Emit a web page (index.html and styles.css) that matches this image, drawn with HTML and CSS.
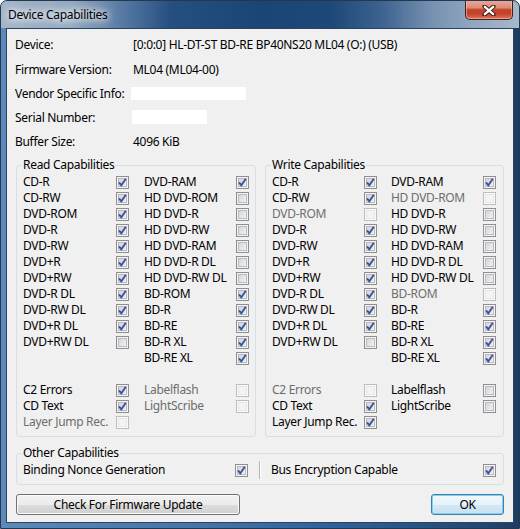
FILE: index.html
```html
<!DOCTYPE html>
<html>
<head>
<meta charset="utf-8">
<title>Device Capabilities</title>
<link rel="stylesheet" href="styles.css">
</head>
<body>
<svg class="defs" width="0" height="0" aria-hidden="true">
  <symbol id="chk" viewBox="0 0 11 11">
    <polyline points="2,5.4 4.3,8.4 8.8,1.8" fill="none" stroke="#3f549b" stroke-width="1.9"/>
  </symbol>
</svg>
<div class="window">
  <div class="titlebar">
    <span class="title">Device Capabilities</span>
    <span class="close"><svg width="14" height="11" viewBox="0 0 14 11"><path d="M2.5 1.5 L11.5 9.5 M11.5 1.5 L2.5 9.5" stroke="#3b1710" stroke-width="4.2" stroke-linecap="round"/><path d="M2.8 1.8 L11.2 9.2 M11.2 1.8 L2.8 9.2" stroke="#fff" stroke-width="2.4" stroke-linecap="round"/></svg></span>
  </div>
  <div class="client">
    <div class="info">
      <div class="irow first"><span class="ilabel">Device:</span><span class="ival">[0:0:0] HL-DT-ST BD-RE BP40NS20 ML04 (O:) (USB)</span></div>
      <div class="irow"><span class="ilabel">Firmware Version:</span><span class="ival">ML04 (ML04-00)</span></div>
      <div class="irow"><span class="ilabel">Vendor Specific Info:</span><span class="field vendor"></span></div>
      <div class="irow"><span class="ilabel">Serial Number:</span><span class="field serial"></span></div>
      <div class="irow"><span class="ilabel">Buffer Size:</span><span class="ival">4096 KiB</span></div>
    </div>

    <div class="groups">
      <fieldset class="group read">
        <legend>Read Capabilities</legend>
        <div class="grid">
          <span class="lb">CD-R</span><span class="cb on"><svg><use href="#chk"/></svg></span><span class="lb">DVD-RAM</span><span class="cb on"><svg><use href="#chk"/></svg></span>
          <span class="lb">CD-RW</span><span class="cb on"><svg><use href="#chk"/></svg></span><span class="lb">HD DVD-ROM</span><span class="cb"></span>
          <span class="lb">DVD-ROM</span><span class="cb on"><svg><use href="#chk"/></svg></span><span class="lb">HD DVD-R</span><span class="cb"></span>
          <span class="lb">DVD-R</span><span class="cb on"><svg><use href="#chk"/></svg></span><span class="lb">HD DVD-RW</span><span class="cb"></span>
          <span class="lb">DVD-RW</span><span class="cb on"><svg><use href="#chk"/></svg></span><span class="lb">HD DVD-RAM</span><span class="cb"></span>
          <span class="lb">DVD+R</span><span class="cb on"><svg><use href="#chk"/></svg></span><span class="lb">HD DVD-R DL</span><span class="cb"></span>
          <span class="lb">DVD+RW</span><span class="cb on"><svg><use href="#chk"/></svg></span><span class="lb">HD DVD-RW DL</span><span class="cb"></span>
          <span class="lb">DVD-R DL</span><span class="cb on"><svg><use href="#chk"/></svg></span><span class="lb">BD-ROM</span><span class="cb on"><svg><use href="#chk"/></svg></span>
          <span class="lb">DVD-RW DL</span><span class="cb on"><svg><use href="#chk"/></svg></span><span class="lb">BD-R</span><span class="cb on"><svg><use href="#chk"/></svg></span>
          <span class="lb">DVD+R DL</span><span class="cb on"><svg><use href="#chk"/></svg></span><span class="lb">BD-RE</span><span class="cb on"><svg><use href="#chk"/></svg></span>
          <span class="lb">DVD+RW DL</span><span class="cb"></span><span class="lb">BD-R XL</span><span class="cb on"><svg><use href="#chk"/></svg></span>
          <span class="lb"></span><span class="empty"></span><span class="lb">BD-RE XL</span><span class="cb on"><svg><use href="#chk"/></svg></span>
          <span class="spacer"></span>
          <span class="lb">C2 Errors</span><span class="cb on"><svg><use href="#chk"/></svg></span><span class="lb dis">Labelflash</span><span class="cb dis"></span>
          <span class="lb">CD Text</span><span class="cb on"><svg><use href="#chk"/></svg></span><span class="lb dis">LightScribe</span><span class="cb dis"></span>
          <span class="lb dis">Layer Jump Rec.</span><span class="cb dis"></span><span class="lb"></span><span class="empty"></span>
        </div>
      </fieldset>

      <fieldset class="group write">
        <legend>Write Capabilities</legend>
        <div class="grid">
          <span class="lb">CD-R</span><span class="cb on"><svg><use href="#chk"/></svg></span><span class="lb">DVD-RAM</span><span class="cb on"><svg><use href="#chk"/></svg></span>
          <span class="lb">CD-RW</span><span class="cb on"><svg><use href="#chk"/></svg></span><span class="lb dis">HD DVD-ROM</span><span class="cb dis"></span>
          <span class="lb dis">DVD-ROM</span><span class="cb dis"></span><span class="lb">HD DVD-R</span><span class="cb"></span>
          <span class="lb">DVD-R</span><span class="cb on"><svg><use href="#chk"/></svg></span><span class="lb">HD DVD-RW</span><span class="cb"></span>
          <span class="lb">DVD-RW</span><span class="cb on"><svg><use href="#chk"/></svg></span><span class="lb">HD DVD-RAM</span><span class="cb"></span>
          <span class="lb">DVD+R</span><span class="cb on"><svg><use href="#chk"/></svg></span><span class="lb">HD DVD-R DL</span><span class="cb"></span>
          <span class="lb">DVD+RW</span><span class="cb on"><svg><use href="#chk"/></svg></span><span class="lb">HD DVD-RW DL</span><span class="cb"></span>
          <span class="lb">DVD-R DL</span><span class="cb on"><svg><use href="#chk"/></svg></span><span class="lb dis">BD-ROM</span><span class="cb dis"></span>
          <span class="lb">DVD-RW DL</span><span class="cb on"><svg><use href="#chk"/></svg></span><span class="lb">BD-R</span><span class="cb on"><svg><use href="#chk"/></svg></span>
          <span class="lb">DVD+R DL</span><span class="cb on"><svg><use href="#chk"/></svg></span><span class="lb">BD-RE</span><span class="cb on"><svg><use href="#chk"/></svg></span>
          <span class="lb">DVD+RW DL</span><span class="cb"></span><span class="lb">BD-R XL</span><span class="cb on"><svg><use href="#chk"/></svg></span>
          <span class="lb"></span><span class="empty"></span><span class="lb">BD-RE XL</span><span class="cb on"><svg><use href="#chk"/></svg></span>
          <span class="spacer"></span>
          <span class="lb dis">C2 Errors</span><span class="cb dis"></span><span class="lb">Labelflash</span><span class="cb"></span>
          <span class="lb">CD Text</span><span class="cb on"><svg><use href="#chk"/></svg></span><span class="lb">LightScribe</span><span class="cb"></span>
          <span class="lb">Layer Jump Rec.</span><span class="cb on"><svg><use href="#chk"/></svg></span><span class="lb"></span><span class="empty"></span>
        </div>
      </fieldset>
    </div>

    <fieldset class="group other">
      <legend>Other Capabilities</legend>
      <div class="orow">
        <div class="half"><span class="lb">Binding Nonce Generation</span><span class="cb on"><svg><use href="#chk"/></svg></span></div>
        <span class="sep"></span>
        <div class="half"><span class="lb">Bus Encryption Capable</span><span class="cb on"><svg><use href="#chk"/></svg></span></div>
      </div>
    </fieldset>

    <div class="buttons">
      <button class="btn fw">Check For Firmware Update</button>
      <button class="btn ok">OK</button>
    </div>
  </div>
</div>
</body>
</html>
```

FILE: styles.css
```css
* { box-sizing: border-box; }
html, body { margin: 0; padding: 0; }
body {
  width: 520px;
  height: 529px;
  overflow: hidden;
  background: #ffffff;
  font-family: "Noto Sans", "Open Sans", sans-serif;
  font-size: 12px;
  letter-spacing: -0.3px;
  color: #000;
}
.defs { position: absolute; width: 0; height: 0; }

.window {
  width: 520px;
  height: 529px;
  border: 1px solid #24384f;
  border-radius: 7px 7px 0 0;
  display: flex;
  flex-direction: column;
  overflow: hidden;
  background: linear-gradient(90deg, #5c89b8 0%, #4676aa 35%, #30609a 65%, #234a78 90%, #1d3d63 100%);
}

.titlebar {
  height: 27px;
  flex: none;
  display: flex;
  align-items: flex-start;
  background: linear-gradient(90deg, #a2b5c9 0px, #93a9c0 70px, #587ba3 120px, #254f80 170px, #1b4576 260px, #1e4877 330px, #3c628f 380px, #7590b0 430px, #8fa6be 470px, #a7b9cc 520px);
}
.title {
  margin: 6px 0 0 7px;
  line-height: 16px;
  color: #000;
  text-shadow: 0 0 6px #fff, 0 0 10px rgba(255,255,255,.9), 0 0 14px rgba(255,255,255,.8);
}
.close {
  margin: -1px 6px 0 auto;
  width: 48px;
  height: 20px;
  border: 1px solid #4a1c13;
  border-top: none;
  border-radius: 0 0 5px 5px;
  background: linear-gradient(#e9ab9b 0%, #dc8c78 40%, #c4422a 52%, #c1432b 72%, #d9765b 100%);
  box-shadow: inset 0 0 0 1px rgba(255,220,210,.45);
  display: flex;
  align-items: center;
  justify-content: center;
  padding-top: 1px;
}

.client {
  flex: 1;
  margin: 0 5px 5px 5px;
  border: 1px solid #2a4461;
  background: #f0f0f0;
  padding: 3px 9px 0 9px;
  display: flex;
  flex-direction: column;
}

.info { margin-left: -1px; }
.irow {
  height: 24px;
  display: flex;
  align-items: center;
}
.irow.first { height: 25px; }
.ilabel { width: 116px; flex: none; }
.ival { padding-left: 2px; white-space: nowrap; }
.field { background: #fff; display: block; }
.field.vendor { width: 115px; height: 13px; }
.field.serial { width: 75px; height: 14px; margin-left: 1px; }

.groups {
  margin-top: 4px;
  display: flex;
  gap: 9px;
}
.group {
  margin: 0;
  padding: 1px 5px 6px 5px;
  border: 1px solid #d5dfe5;
  border-radius: 3px;
  min-width: 0;
}
.group legend {
  padding: 0 1px;
  line-height: 16px;
  height: 16px;
  color: #000;
}
.read { width: 240px; }
.write { width: 239px; }

.grid {
  padding-left: 1px;
  display: grid;
  grid-template-columns: 93px 28px 92px 13px;
  grid-auto-rows: 16px;
  align-items: center;
}
.write .grid { grid-template-columns: 92px 27px 92px 13px; }
.spacer { grid-column: 1 / -1; }
.lb { line-height: 16px; white-space: nowrap; }
.lb.dis { color: #6d6d6d; }

.cb {
  width: 13px;
  height: 13px;
  display: block;
  border: 1px solid #8e8f8f;
  background: linear-gradient(135deg, #c8ccd2 0%, #e2e4e7 50%, #f7f7f7 100%);
  box-shadow: inset 0 0 0 1px #f4f4f4, inset 0 0 0 2px #b8bcc2;
}
.cb svg { display: block; width: 11px; height: 11px; }
.cb.dis {
  border-color: #bcbcbc;
  background: #f4f4f4;
  box-shadow: inset 0 0 0 1px #fbfbfb, inset 0 0 0 2px #e6e6e6;
}

.other { margin-top: 8px; }
.orow {
  padding-left: 1px;
  height: 16px;
  display: flex;
  align-items: center;
}
.half {
  width: 225px;
  display: flex;
  align-items: center;
  justify-content: space-between;
}
.sep {
  width: 1px;
  height: 18px;
  margin: 0 11px;
  background: #b4b4b4;
  box-shadow: 1px 0 0 #ffffff;
}

.buttons {
  margin-top: 9px;
  display: flex;
  justify-content: space-between;
}
.btn {
  height: 21px;
  margin: 0;
  padding: 0;
  font-family: "Noto Sans", "Open Sans", sans-serif;
  font-size: 12px;
  letter-spacing: -0.3px;
  line-height: 17px;
  color: #000;
  border: 1px solid #707070;
  border-radius: 3px;
  background: linear-gradient(#f2f2f2 0%, #ebebeb 50%, #dddddd 50%, #cfcfcf 100%);
  box-shadow: inset 0 0 0 1px #fcfcfc;
}
.btn.fw { width: 224px; }
.btn.ok {
  width: 73px;
  border-color: #3c7fb1;
  background: linear-gradient(#f1f8fc 0%, #e5f2f9 50%, #d4e9f5 50%, #c5e1f1 100%);
  box-shadow: inset 0 0 0 1px #7fd0f3;
}
```
